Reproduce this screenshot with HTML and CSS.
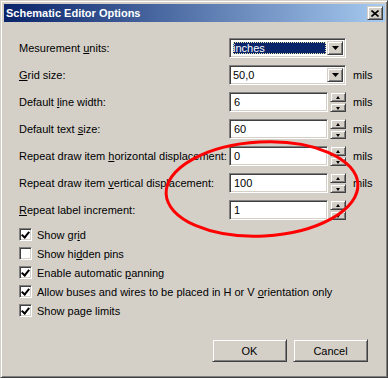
FILE: index.html
```html
<!DOCTYPE html>
<html lang="en">
<head>
    <meta charset="UTF-8">
    <title>Schematic Editor Options</title>
    <link rel="stylesheet" href="styles.css">
</head>
<body>
    <div class="window">
        <div class="titlebar">
            <span class="title">Schematic Editor Options</span>
            <button class="close-button">
                <svg width="8" height="7" viewBox="0 0 8 7"><path d="M0.5 0.5 L7.5 6.5 M7.5 0.5 L0.5 6.5" stroke="#000" stroke-width="1.6"/></svg>
            </button>
        </div>

        <div class="dialog-body">
            <div class="fields">
                <label class="field-label">Mesurement <u>u</u>nits:</label>
                <div class="combo">
                    <span class="combo-text selected"><span class="focus-rect">inches</span></span>
                    <span class="drop-button"><svg width="7" height="4" viewBox="0 0 7 4"><polygon points="0,0 7,0 3.5,4" fill="#000"/></svg></span>
                </div>
                <span></span>

                <label class="field-label"><u>G</u>rid size:</label>
                <div class="combo">
                    <span class="combo-text">50,0</span>
                    <span class="drop-button"><svg width="7" height="4" viewBox="0 0 7 4"><polygon points="0,0 7,0 3.5,4" fill="#000"/></svg></span>
                </div>
                <span class="unit">mils</span>

                <label class="field-label">Default <u>l</u>ine width:</label>
                <div class="spin-field">
                    <span class="edit">6</span>
                    <span class="spin"><span class="spin-up"></span><span class="spin-down"></span></span>
                </div>
                <span class="unit">mils</span>

                <label class="field-label">Default text <u>s</u>ize:</label>
                <div class="spin-field">
                    <span class="edit">60</span>
                    <span class="spin"><span class="spin-up"></span><span class="spin-down"></span></span>
                </div>
                <span class="unit">mils</span>

                <label class="field-label">Repeat draw item <u>h</u>orizontal displacement:</label>
                <div class="spin-field">
                    <span class="edit">0</span>
                    <span class="spin"><span class="spin-up"></span><span class="spin-down"></span></span>
                </div>
                <span class="unit">mils</span>

                <label class="field-label">Repeat draw item <u>v</u>ertical displacement:</label>
                <div class="spin-field">
                    <span class="edit">100</span>
                    <span class="spin"><span class="spin-up"></span><span class="spin-down"></span></span>
                </div>
                <span class="unit">mils</span>

                <label class="field-label"><u>R</u>epeat label increment:</label>
                <div class="spin-field">
                    <span class="edit">1</span>
                    <span class="spin"><span class="spin-up"></span><span class="spin-down"></span></span>
                </div>
                <span></span>
            </div>

            <div class="checks">
                <label class="check-row"><span class="checkbox checked"></span><span>Show gr<u>i</u>d</span></label>
                <label class="check-row"><span class="checkbox"></span><span>Show hi<u>d</u>den pins</span></label>
                <label class="check-row"><span class="checkbox checked"></span><span>Enable automatic <u>p</u>anning</span></label>
                <label class="check-row"><span class="checkbox checked"></span><span>Allow buses and wires to be placed in H or V <u>o</u>rientation only</span></label>
                <label class="check-row"><span class="checkbox checked"></span><span>Show pa<u>g</u>e limits</span></label>
            </div>

            <div class="buttons">
                <button class="push-button">OK</button>
                <button class="push-button">Cancel</button>
            </div>
        </div>

        <!-- red marker drawn over the screenshot -->
        <svg class="marker" width="388" height="378" viewBox="0 0 388 378">
            <ellipse cx="261" cy="188" rx="96" ry="47" transform="rotate(-3 261 188)" fill="none" stroke="#ff0000" stroke-width="3"/>
        </svg>
    </div>
</body>
</html>
```

FILE: styles.css
```css
* {
    margin: 0;
    padding: 0;
    box-sizing: border-box;
}

body {
    font-family: "Liberation Sans", Arial, sans-serif;
    font-size: 11px;
    color: #000;
    background: #d4d0c8;
}

.window {
    position: relative;
    width: 388px;
    height: 378px;
    padding: 3px 2px 2px 3px;
    background: #d4d0c8;
    border: 1px solid;
    border-color: #d4d0c8 #404040 #404040 #d4d0c8;
    box-shadow: inset 1px 1px #fff, inset -1px -1px #808080;
}

.titlebar {
    height: 18px;
    display: flex;
    align-items: center;
    justify-content: space-between;
    padding: 0 2px 0 2px;
    background: linear-gradient(to right, #0a246a, #a6caf0);
}

.title {
    color: #fff;
    font-weight: bold;
    font-size: 11px;
}

.close-button,
.drop-button,
.spin-up,
.spin-down,
.push-button {
    background: #d4d0c8;
    border: 1px solid;
    border-color: #d4d0c8 #404040 #404040 #d4d0c8;
    box-shadow: inset 1px 1px #fff, inset -1px -1px #808080;
}

.close-button {
    width: 16px;
    height: 14px;
    display: flex;
    align-items: center;
    justify-content: center;
}

.dialog-body {
    padding: 16px 16px 0 15px;
}

.fields {
    display: grid;
    grid-template-columns: 210px 117px auto;
    grid-auto-rows: 20px;
    row-gap: 7px;
    align-items: center;
}

.field-label {
    white-space: nowrap;
}

.unit {
    padding-left: 7px;
}

.combo,
.edit,
.checkbox {
    background: #fff;
    border: 1px solid;
    border-color: #808080 #fff #fff #808080;
    box-shadow: inset 1px 1px #404040, inset -1px -1px #d4d0c8;
}

.combo {
    height: 20px;
    display: flex;
    padding: 2px;
}

.combo-text {
    flex: 1;
    display: flex;
    align-items: center;
    padding-left: 1px;
}

.combo-text.selected {
    padding: 1px;
}

.focus-rect {
    flex: 1;
    height: 100%;
    display: flex;
    align-items: center;
    background: #0a246a;
    color: #fff;
    outline: 1px dotted #e8e8b0;
    outline-offset: -1px;
}

.drop-button {
    width: 16px;
    display: flex;
    align-items: center;
    justify-content: center;
}

.spin-field {
    display: flex;
    gap: 2px;
    height: 20px;
}

.edit {
    width: 99px;
    display: flex;
    align-items: center;
    padding-left: 4px;
}

.spin {
    width: 16px;
    display: flex;
    flex-direction: column;
    gap: 1px;
}

.spin-up,
.spin-down {
    flex: 1;
    position: relative;
}

.spin-up::after,
.spin-down::after {
    content: "";
    position: absolute;
    left: 5px;
    top: 3px;
    border-left: 2.5px solid transparent;
    border-right: 2.5px solid transparent;
}

.spin-up::after {
    border-bottom: 3px solid #000;
}

.spin-down::after {
    border-top: 3px solid #000;
}

.checks {
    margin-top: 5px;
    display: flex;
    flex-direction: column;
}

.check-row {
    height: 19px;
    display: flex;
    align-items: center;
    gap: 5px;
    white-space: nowrap;
}

.checkbox {
    width: 13px;
    height: 13px;
    position: relative;
}

.checkbox.checked::after {
    content: "";
    position: absolute;
    left: 3px;
    top: 1px;
    width: 3px;
    height: 6px;
    border-right: 2px solid #000;
    border-bottom: 2px solid #000;
    transform: rotate(40deg);
}

.buttons {
    margin-top: 19px;
    display: flex;
    justify-content: flex-end;
    gap: 6px;
    padding-right: 1px;
}

.push-button {
    width: 75px;
    height: 23px;
    font-family: inherit;
    font-size: 11px;
    color: #000;
}

.marker {
    position: absolute;
    left: 0;
    top: 0;
    pointer-events: none;
}
```
